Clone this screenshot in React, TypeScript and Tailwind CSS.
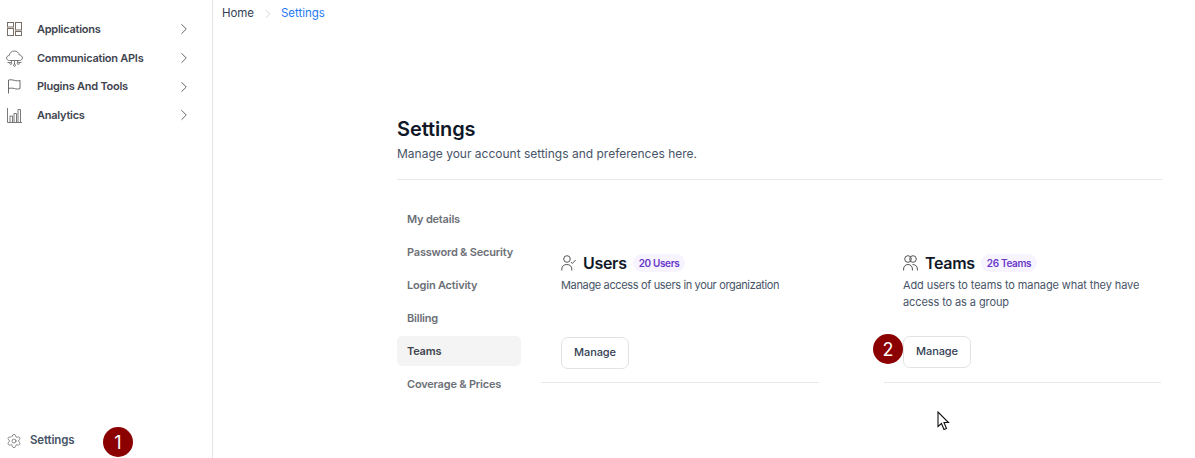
import { ChevronRight, Settings } from "lucide-react";

const navItems = [
  { label: "Applications", icon: <AppsIcon /> },
  { label: "Communication APIs", icon: <CloudIcon /> },
  { label: "Plugins And Tools", icon: <FlagIcon /> },
  { label: "Analytics", icon: <ChartIcon /> },
];

const menu = ["My details", "Password & Security", "Login Activity", "Billing", "Teams", "Coverage & Prices"];

function AppsIcon() {
  return (
    <svg width="15" height="14" viewBox="0 0 15 14" fill="none" stroke="#7a6f66" strokeWidth="1">
      <rect x="0.5" y="0.5" width="6" height="4.5" />
      <rect x="8.5" y="0.5" width="6" height="7.5" />
      <rect x="0.5" y="6.5" width="6" height="7" />
      <rect x="8.5" y="9.5" width="6" height="4" />
    </svg>
  );
}

function CloudIcon() {
  return (
    <svg width="17" height="17" viewBox="0 0 17 17" fill="none" stroke="#6b6b6b" strokeWidth="0.9">
      <path d="M3.5 10.5C1.7 10.5 0.6 9.4 0.6 8C0.6 6.6 1.7 5.5 3.2 5.5C3.7 2.8 5.8 1 8.3 1C10.8 1 12.8 2.7 13.3 5C15 5.1 16.4 6.4 16.4 8C16.4 9.5 15.2 10.5 13.6 10.5H3.5Z" />
      <path d="M5.5 10.5V12.5M8.5 10.5V14M11.5 10.5V12.5M1.5 12.5H4M13 12.5H15.5" />
      <circle cx="4.8" cy="13.4" r="1" />
      <circle cx="8.5" cy="15.3" r="1" />
      <circle cx="12.2" cy="13.4" r="1" />
    </svg>
  );
}

function FlagIcon() {
  return (
    <svg width="14" height="15" viewBox="0 0 14 15" fill="none" stroke="#6b6b6b" strokeWidth="1">
      <path d="M1.5 14.5V1C3.5 0.6 5.5 0.8 7.5 1.4C9.5 2 11 2 13 1.4V9.5C11 10.2 9.5 10.2 7.5 9.6C5.5 9 3.5 9 1.5 9.5" />
    </svg>
  );
}

function ChartIcon() {
  return (
    <svg width="15" height="15" viewBox="0 0 15 15" fill="none" stroke="#6b6b6b" strokeWidth="0.9">
      <path d="M0.5 0V14.5H15" />
      <path d="M3 14.5V8H5.5V14.5" />
      <path d="M7 14.5V5.5H9.5V14.5" />
      <path d="M11 14.5V1.5H13.5V14.5" />
    </svg>
  );
}

function UserCheckIcon() {
  return (
    <svg width="15" height="16" viewBox="0 0 15 16" fill="none" stroke="#555" strokeWidth="1">
      <circle cx="6" cy="4" r="3.3" />
      <path d="M0.8 15.5V14C0.8 11.3 2.8 9.5 5.8 9.5C8.8 9.5 10.8 11.3 10.8 14V15.5" />
      <path d="M9.8 7L11.3 8.5L14.6 5" />
    </svg>
  );
}

function TeamIcon() {
  return (
    <svg width="15" height="16" viewBox="0 0 15 16" fill="none" stroke="#555" strokeWidth="1">
      <circle cx="5" cy="4" r="3.3" />
      <circle cx="10" cy="4" r="3.3" />
      <path d="M0.6 15.5V14C0.6 11.3 2.5 9.5 5 9.5C7.5 9.5 9.4 11.3 9.4 14V15.5" />
      <path d="M9.5 9.6C12.3 9.4 14.4 11.3 14.4 14V15.5" />
    </svg>
  );
}

function Cursor() {
  return (
    <svg width="13" height="20" viewBox="0 0 13 20" fill="#fff" stroke="#111" strokeWidth="1.1">
      <path d="M1 1V15.5L4.5 12.5L7 18.5L9.5 17.5L7 11.5H11.5L1 1Z" />
    </svg>
  );
}

function Step({ n, className }: { n: number; className: string }) {
  return (
    <div className={`absolute flex h-[30px] w-[30px] items-center justify-center rounded-full bg-[#8b0000] text-[18px] text-white ${className}`}>
      {n}
    </div>
  );
}

function Card({ icon, title, badge, text, className, textClass }: { icon: React.ReactNode; title: string; badge: string; text: React.ReactNode; className: string; textClass: string }) {
  return (
    <div className={`flex h-[131px] flex-col border-b border-[#e8e8e8] ${className}`}>
      <div className="flex h-[22px] items-center">
        <span className="mr-[7px] mb-[1px]">{icon}</span>
        <span className="text-[16px] font-semibold tracking-[-0.3px] text-[#101828]">{title}</span>
        <span className="ml-[6px] rounded-full bg-[#f7f3ff] px-[6px] py-[2px] text-[10px] leading-[14px] font-semibold tracking-[-0.35px] text-[#6938c9]">
          {badge}
        </span>
      </div>
      <p className={`mt-[3px] text-[11px] leading-[17px] text-[#475467] ${textClass}`}>{text}</p>
    </div>
  );
}

export default function App() {
  return (
    <div className="relative flex h-[458px] w-[1195px] overflow-hidden bg-white font-['Inter',sans-serif]">
      <aside className="flex w-[213px] shrink-0 flex-col justify-between border-r border-[#e4e4e4] pt-[15px] pb-[6px]">
        <nav className="flex flex-col">
          {navItems.map((item) => (
            <div key={item.label} className="flex h-[28.7px] items-center pr-[19px]">
              <span className="flex w-[37px] justify-center pr-[9px]">{item.icon}</span>
              <span className="flex-1 text-[11px] font-semibold tracking-[-0.25px] text-[#3f454f]">{item.label}</span>
              <ChevronRight size={18} strokeWidth={1.2} className="text-[#555]" />
            </div>
          ))}
        </nav>
        <div className="flex h-[22px] items-center pl-[6px]">
          <Settings size={16} strokeWidth={1} className="mr-[8px] text-[#555]" />
          <span className="text-[11.5px] font-semibold tracking-[-0.15px] text-[#475467]">Settings</span>
        </div>
      </aside>

      <main className="flex-1">
        <div className="flex h-[28px] items-center pl-[9px] text-[11.5px] tracking-[-0.05px]">
          <span className="text-[#344054]">Home</span>
          <ChevronRight size={14} strokeWidth={1.3} className="mx-[6.5px] text-[#c4c8cf]" />
          <span className="text-[#1f7bf2]">Settings</span>
        </div>

        <section className="mt-[90px] ml-[184px] w-[765px]">
          <h1 className="text-[20px] leading-[22px] font-semibold tracking-[-0.1px] text-[#101828]">Settings</h1>
          <p className="mt-[4px] text-[12px] leading-[20px] text-[#475467]">Manage your account settings and preferences here.</p>
          <div className="mt-[15px] border-t border-[#e8e8e8]" />

          <div className="mt-[24px] flex">
            <div className="flex w-[124px] shrink-0 flex-col gap-[3px]">
              {menu.map((m) => (
                <div
                  key={m}
                  className={`flex h-[30px] items-center rounded-[5px] pl-[10px] text-[11px] font-semibold tracking-[-0.2px] ${m === "Teams" ? "bg-[#f4f4f4] text-[#3f454f]" : "text-[#6c7077]"}`}
                >
                  {m}
                </div>
              ))}
            </div>

            <div className="relative mt-[48px] ml-[20px] flex flex-1 gap-[65px] pr-px">
              <div className="relative w-[278px]">
                <Card
                  className="pl-[20px]"
                  textClass="tracking-[-0.35px]"
                  icon={<UserCheckIcon />}
                  title="Users"
                  badge="20 Users"
                  text="Manage access of users in your organization"
                />
                <button className="absolute top-[85px] left-[20px] h-[32px] w-[68px] rounded-[7px] border border-[#e2e2e2] bg-white pb-[1px] text-[11px] font-medium tracking-[-0.1px] text-[#344054]">
                  Manage
                </button>
              </div>
              <div className="relative w-[277px]">
                <Card
                  className="pl-[19px]"
                  textClass="tracking-[-0.1px]"
                  icon={<TeamIcon />}
                  title="Teams"
                  badge="26 Teams"
                  text={
                    <>
                      Add users to teams to manage what they have
                      <br />
                      access to as a group
                    </>
                  }
                />
                <button className="absolute top-[84px] left-[19px] h-[32px] w-[68px] rounded-[7px] border border-[#e2e2e2] bg-white pb-[1px] text-[11px] font-medium tracking-[-0.1px] text-[#344054]">
                  Manage
                </button>
              </div>
            </div>
          </div>
        </section>
      </main>

      <Step n={1} className="top-[427px] left-[103px]" />
      <Step n={2} className="top-[334px] left-[873px]" />
      <div className="absolute top-[411px] left-[937px]">
        <Cursor />
      </div>
    </div>
  );
}
